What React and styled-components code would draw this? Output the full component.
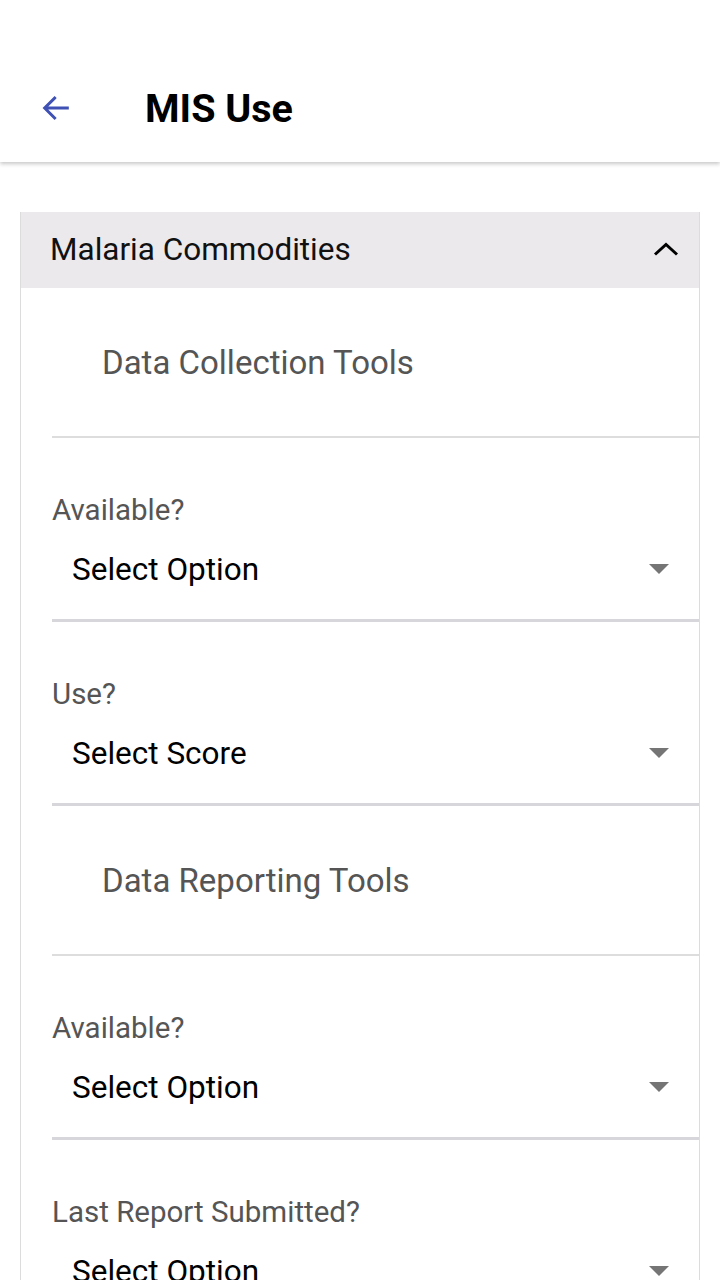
import React from "react";
import styled, { createGlobalStyle } from "styled-components";

const Global = createGlobalStyle`
  html, body { margin: 0; padding: 0; background: #ffffff; }
  body { font-family: Roboto, "Noto Sans", "Liberation Sans", sans-serif; }
  * { box-sizing: border-box; }
`;

const Page = styled.div`
  width: 720px;
  height: 1280px;
  background: #ffffff;
  overflow: hidden;
`;

const Header = styled.header`
  height: 162px;
  padding-top: 54px;
  display: flex;
  align-items: center;
  background: #ffffff;
  box-shadow: 0 2px 4px rgba(0, 0, 0, 0.22);
  position: relative;
  z-index: 1;
`;

const BackButton = styled.button`
  width: 40px;
  height: 40px;
  margin-left: 36px;
  padding: 0;
  border: none;
  background: transparent;
  display: flex;
  align-items: center;
  justify-content: center;
`;

const Title = styled.h1`
  margin: 0 0 0 69px;
  font-size: 39.5px;
  font-weight: 700;
  color: #000000;
  letter-spacing: 0;
`;

const Main = styled.main`
  padding: 50px 20px 0 20px;
`;

const Card = styled.section`
  border-left: 1px solid #dcdcdc;
  border-right: 1px solid #dcdcdc;
`;

const CardHeader = styled.div`
  height: 76px;
  background: #ebe9ec;
  display: flex;
  align-items: center;
  justify-content: space-between;
  padding: 0 20px 2px 29px;
`;

const CardTitle = styled.span`
  font-size: 31.5px;
  color: #111111;
`;

const CardBody = styled.div`
  padding-left: 31px;
`;

const SectionTitle = styled.div`
  height: 150px;
  padding-left: 50px;
  display: flex;
  align-items: center;
  font-size: 33px;
  color: #555555;
  border-bottom: 2px solid #dddddd;
`;

const Field = styled.div`
  padding-top: 54px;
  padding-bottom: 27px;
  border-bottom: 3px solid #d7d7db;
`;

const Label = styled.div`
  line-height: 36px;
  font-size: 29.5px;
  color: #555555;
`;

const SelectRow = styled.div`
  margin-top: 18px;
  height: 46px;
  display: flex;
  align-items: center;
  justify-content: space-between;
  padding: 0 30px 0 20px;
`;

const SelectText = styled.span`
  font-size: 31.5px;
  color: #000000;
`;

const Caret = styled.span`
  width: 0;
  height: 0;
  border-left: 10px solid transparent;
  border-right: 10px solid transparent;
  border-top: 10px solid #757575;
`;

const ArrowLeft = () => (
  <svg width="34" height="34" viewBox="0 0 24 24" fill="none">
    <path d="M20 12H4.5M11 5l-7 7 7 7" stroke="#3f51b5" strokeWidth="2.1" strokeLinecap="square" />
  </svg>
);

const ChevronUp = () => (
  <svg width="26" height="14" viewBox="0 0 26 14" fill="none">
    <path d="M2 12.5L13 2.5 24 12.5" stroke="#000" strokeWidth="3" />
  </svg>
);

const SelectField = ({ label, value }) => (
  <Field>
    <Label>{label}</Label>
    <SelectRow>
      <SelectText>{value}</SelectText>
      <Caret />
    </SelectRow>
  </Field>
);

export default function App() {
  return (
    <Page>
      <Global />
      <Header>
        <BackButton aria-label="Back">
          <ArrowLeft />
        </BackButton>
        <Title>MIS Use</Title>
      </Header>
      <Main>
        <Card>
          <CardHeader>
            <CardTitle>Malaria Commodities</CardTitle>
            <ChevronUp />
          </CardHeader>
          <CardBody>
            <SectionTitle>Data Collection Tools</SectionTitle>
            <SelectField label="Available?" value="Select Option" />
            <SelectField label="Use?" value="Select Score" />
            <SectionTitle>Data Reporting Tools</SectionTitle>
            <SelectField label="Available?" value="Select Option" />
            <SelectField label="Last Report Submitted?" value="Select Option" />
          </CardBody>
        </Card>
      </Main>
    </Page>
  );
}
